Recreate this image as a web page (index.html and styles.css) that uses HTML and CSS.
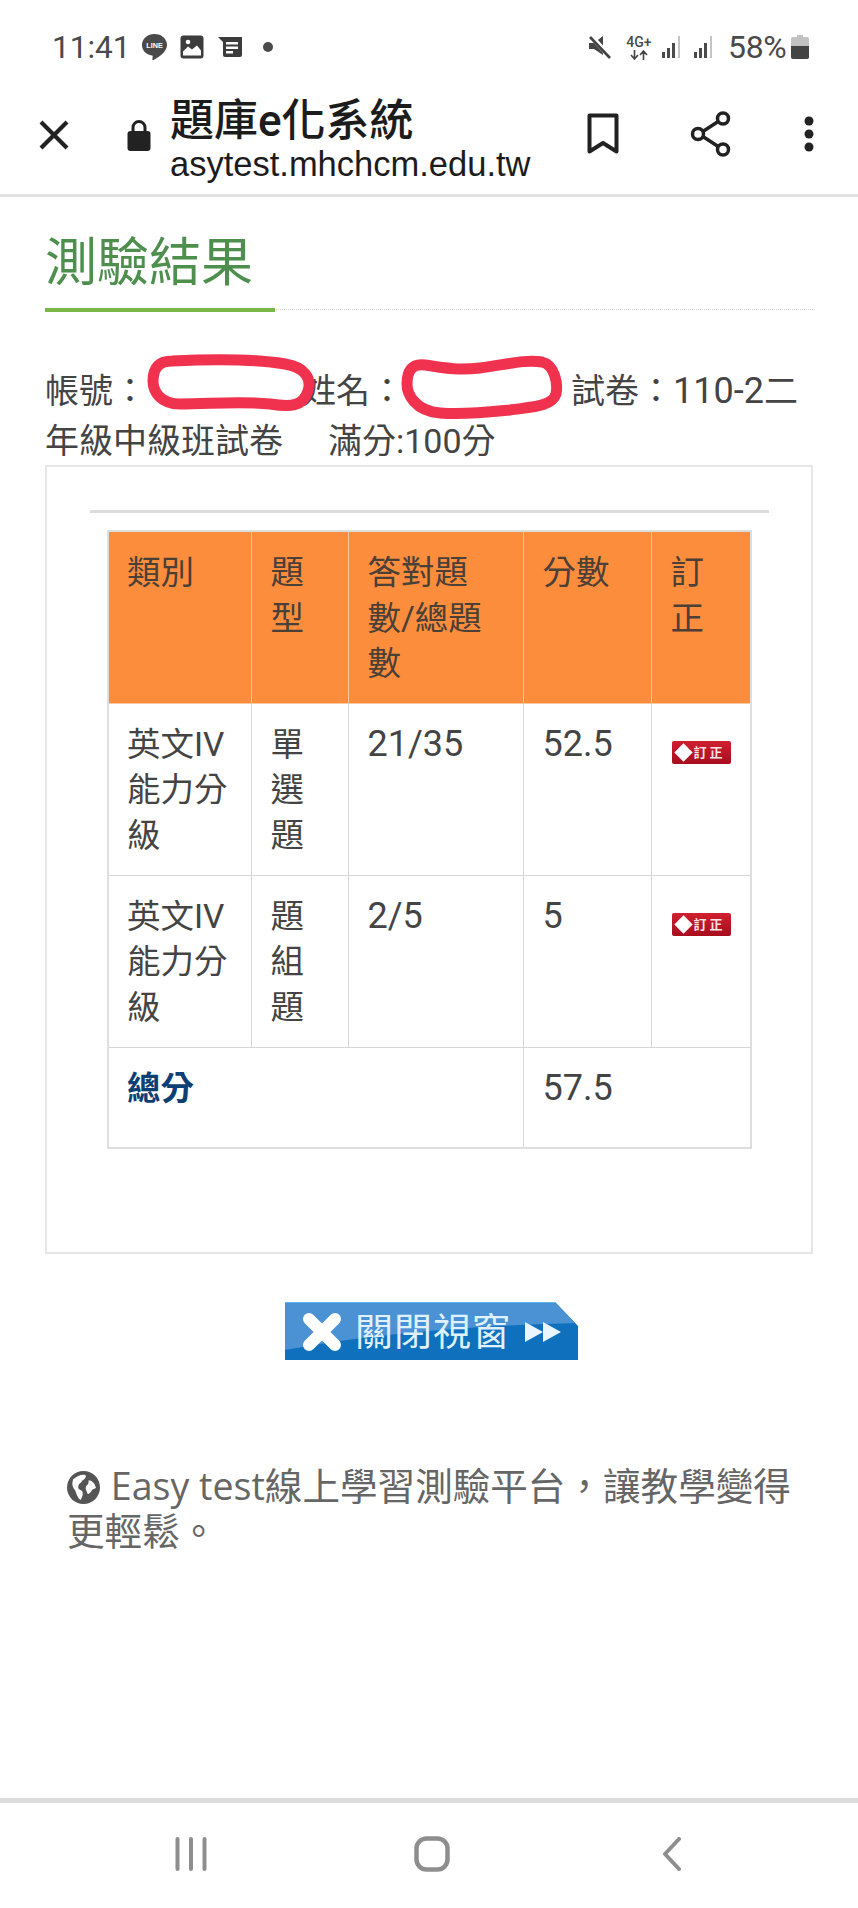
FILE: index.html
```html
<!DOCTYPE html>
<html lang="zh-Hant">
<head>
<meta charset="utf-8">
<title>題庫e化系統</title>
<link rel="stylesheet" href="styles.css">
</head>
<body>
<div class="phone">
  <div class="status">
    <div class="status-group">
      <span class="clock">11:41</span>
      <svg class="ic-line" viewBox="0 0 28 30"><path d="M14 1C6.800 1 1 6 1 12.400c0 5.600 4.300 10 10.400 11 .6.100.8.500.7 1l-.3 2.800c-.1.900.5 1.300 1.300.8 3-1.800 13.900-7.600 13.900-15.600C27 6 21.200 1 14 1z" fill="#4a4a4a"/><text x="14" y="15.500" text-anchor="middle" class="ic-line-text">LINE</text></svg>
      <svg class="ic-pic" viewBox="0 0 24 24"><rect x="0.500" y="0.500" width="23" height="23" rx="3" fill="#3c3c3c"/><path d="M3 20.500v-4l5-5 4 3 5-4 4 5v5z" fill="#fff"/><circle cx="8" cy="7" r="2.300" fill="#fff"/></svg>
      <svg class="ic-news" viewBox="0 0 24 22"><path d="M0 1h24v18a2 2 0 0 1-2 2H7a2 2 0 0 1-2-2V6z" fill="#3c3c3c"/><path d="M8 6h12v2.500H8zM8 10.500h12V13H8zM8 15h7v2.500H8z" fill="#fff"/></svg>
      <span class="status-dot"></span>
    </div>
    <div class="status-group">
      <svg class="ic-mute" viewBox="0 0 24 24"><path d="M1 8h5l9-7v19l-9-6H1z" fill="#444"/><path d="M3 1l20 22" stroke="#fff" stroke-width="5"/><path d="M2 2l20 21" stroke="#444" stroke-width="2.600"/></svg>
      <span class="net">
        <span class="net-top">4G+</span>
        <svg class="net-arrows" viewBox="0 0 20 10"><path d="M5.500 0v8M2 5l3.500 4L9 5M14.500 10V2M11 5l3.500-4L18 5" stroke="#444" stroke-width="1.600" fill="none"/></svg>
      </span>
      <svg class="ic-signal" viewBox="0 0 22 22"><path d="M0 16h3v6H0zM5 12h3v10H5zM10 7h3v15h-3z" fill="#4a4a4a"/><path d="M16 0h2v22h-2z" fill="#c4c4c4"/></svg>
      <svg class="ic-signal" viewBox="0 0 22 22"><path d="M0 16h3v6H0zM5 12h3v10H5zM10 7h3v15h-3z" fill="#4a4a4a"/><path d="M16 0h2v22h-2z" fill="#c4c4c4"/></svg>
      <span class="battery-text">58%</span>
      <svg class="ic-battery" viewBox="0 0 18 24"><path d="M6 0h6v2h4a2 2 0 0 1 2 2v18a2 2 0 0 1-2 2H2a2 2 0 0 1-2-2V4a2 2 0 0 1 2-2h4z" fill="#c2c2c2"/><path d="M0 11h18v11a2 2 0 0 1-2 2H2a2 2 0 0 1-2-2z" fill="#444"/></svg>
    </div>
  </div>

  <header class="toolbar">
    <svg class="ic-close" viewBox="0 0 32 32"><path d="M3 3l26 26M29 3L3 29" stroke="#222" stroke-width="4.200" fill="none"/></svg>
    <svg class="ic-lock" viewBox="0 0 24 32"><path d="M6 14V8.500a6 6 0 0 1 12 0V14" stroke="#222" stroke-width="3" fill="none"/><rect x="0.500" y="12" width="23" height="20" rx="3" fill="#222"/></svg>
    <div class="page-title">
      <div class="site-name">題庫e化系統</div>
      <div class="site-url">asytest.mhchcm.edu.tw</div>
    </div>
    <svg class="ic-bookmark" viewBox="0 0 32 42"><path d="M2.500 2.500h27v36L16 30 2.500 38.500z" stroke="#222" stroke-width="4" fill="none" stroke-linejoin="round"/></svg>
    <svg class="ic-share" viewBox="0 0 42 46"><path d="M32 8L9 23l23 15" stroke="#222" stroke-width="3.500" fill="none"/><circle cx="33" cy="7.500" r="5.500" fill="#fff" stroke="#222" stroke-width="3.500"/><circle cx="8" cy="23" r="5.500" fill="#fff" stroke="#222" stroke-width="3.500"/><circle cx="33" cy="38.500" r="5.500" fill="#fff" stroke="#222" stroke-width="3.500"/></svg>
    <svg class="ic-more" viewBox="0 0 10 36"><circle cx="5" cy="5" r="4.500" fill="#222"/><circle cx="5" cy="18" r="4.500" fill="#222"/><circle cx="5" cy="31" r="4.500" fill="#222"/></svg>
  </header>

  <main class="content">
    <h1 class="heading"><span class="heading-text">測驗結果</span></h1>

    <div class="info">
      <div class="info-line">帳號：<span class="hidden-id"></span>姓名：<span class="hidden-name"></span>試卷：<span class="num">110-2</span>二</div>
      <div class="info-line">年級中級班試卷<span class="info-gap">滿分:100分</span></div>
      <svg class="scribble" viewBox="45 340 520 90">
        <path d="M172 362C210 360 255 360 285 365C305 368 312 380 308 392C303 408 290 408 270 405C240 402 210 405 180 405C160 405 153 392 153 382C153 368 160 362 172 362Z"/>
        <path d="M425 366C440 368 455 372 480 369C505 366 525 360 542 363C555 366 558 385 556 395C552 408 530 408 510 411C490 413 465 416 440 414C415 412 407 395 407 385C407 372 412 364 425 366Z"/>
      </svg>
    </div>

    <section class="panel">
      <div class="panel-rule"></div>
      <table class="result">
        <colgroup>
          <col class="col-a"><col class="col-b"><col class="col-c"><col class="col-d"><col class="col-e">
        </colgroup>
        <thead>
          <tr><th>類別</th><th>題型</th><th>答對題數/總題數</th><th>分數</th><th>訂正</th></tr>
        </thead>
        <tbody>
          <tr>
            <td>英文IV能力分級</td><td>單選題</td><td><span class="num">21/35</span></td><td><span class="num">52.5</span></td>
            <td><a class="fix-badge"><span class="fix-diamond"></span><span>訂正</span></a></td>
          </tr>
          <tr>
            <td>英文IV能力分級</td><td>題組題</td><td><span class="num">2/5</span></td><td><span class="num">5</span></td>
            <td><a class="fix-badge"><span class="fix-diamond"></span><span>訂正</span></a></td>
          </tr>
          <tr class="total">
            <td colspan="3"><strong>總分</strong></td><td colspan="2"><span class="num">57.5</span></td>
          </tr>
        </tbody>
      </table>
    </section>

    <a class="close-btn">
      <svg class="close-art" viewBox="0 0 293 57" preserveAspectRatio="none"><path d="M0 47C90 30 200 22 293 20V0H0z" fill="#4a92d4"/></svg>
      <svg class="close-x" viewBox="0 0 42 42"><path d="M8 8l26 26M34 8L8 34" stroke="#fff" stroke-width="12" stroke-linecap="round"/></svg>
      <span class="close-label">關閉視窗</span>
      <svg class="close-arrows" viewBox="0 0 38 24"><path d="M1 2l18 10L1 22zM19 2l18 10-18 10z" fill="#eaf6ff"/></svg>
    </a>

    <p class="foot">
      <svg class="globe" viewBox="0 0 32 32"><circle cx="16" cy="16" r="16" fill="#555"/><path d="M6 8c4-3 8-5 12-4 1 2-1 4-3 5-1 3-4 3-4 6-1 3 3 3 4 5 1 3-1 7-2 8-3-2-4-6-5-9-2-3-4-5-2-11zM21 9c3 0 6 3 7 7-1 2-3 1-4 3-1 2-3 4-4 3-1-3-3-5-1-8 2-1 2-3 2-5z" fill="#fff"/></svg>
      <span class="foot-text">Easy test線上學習測驗平台，讓教學變得更輕鬆。</span>
    </p>
  </main>

  <nav class="navbar">
    <svg class="nav-recent" viewBox="0 0 32 34"><path d="M2.500 2v30M16 2v30M29.500 2v30" stroke="#8e8e8e" stroke-width="4" stroke-linecap="round"/></svg>
    <svg class="nav-home" viewBox="0 0 36 36"><rect x="2.500" y="2.500" width="31" height="31" rx="10" fill="none" stroke="#8e8e8e" stroke-width="4.500"/></svg>
    <svg class="nav-back" viewBox="0 0 20 34"><path d="M17 2L3 17l14 15" fill="none" stroke="#8e8e8e" stroke-width="4" stroke-linecap="round" stroke-linejoin="round"/></svg>
  </nav>
</div>
</body>
</html>
```

FILE: styles.css
```css
* { box-sizing: border-box; }

html, body { margin: 0; padding: 0; background: #fff; }

.phone {
  width: 858px;
  height: 1908px;
  display: flex;
  flex-direction: column;
  overflow: hidden;
  font-family: Roboto, "Noto Sans CJK TC", sans-serif;
  color: #444;
}

/* status bar */
.status {
  height: 94px;
  flex: none;
  display: flex;
  justify-content: space-between;
  align-items: center;
  padding: 0 49px 0 52px;
  color: #4a4a4a;
}
.status-group { display: flex; align-items: center; }
.clock { font-size: 31.5px; width: 76px; white-space: nowrap; }
.ic-line { width: 27px; height: 29px; margin-left: 13px; }
.ic-line-text { font: 700 7.5px "Liberation Sans", sans-serif; fill: #fff; }
.ic-pic { width: 24px; height: 24px; margin-left: 12px; }
.ic-news { width: 24px; height: 22px; margin-left: 14px; }
.status-dot { width: 10px; height: 10px; border-radius: 50%; background: #4a4a4a; margin-left: 21px; }

.ic-mute { width: 24px; height: 24px; }
.net { display: flex; flex-direction: column; align-items: center; width: 26px; margin-left: 14px; }
.net-top { font-size: 14px; line-height: 14px; font-weight: 500; }
.net-arrows { width: 22px; height: 10px; margin-top: 1px; }
.ic-signal { width: 22px; height: 22px; margin-left: 10px; }
.battery-text { font-size: 32px; margin-left: 12px; width: 61px; white-space: nowrap; letter-spacing: -0.3px; }
.ic-battery { width: 18px; height: 24px; margin-left: 2px; }

/* browser toolbar */
.toolbar {
  height: 103px;
  flex: none;
  display: flex;
  align-items: center;
  border-bottom: 3px solid #e2e2e2;
  padding: 0 0 20px 38px;
}
.ic-close { width: 32px; height: 32px; margin-top: 2px; flex: none; }
.ic-lock { width: 24px; height: 32px; margin-left: 57px; margin-top: 2px; flex: none; }
.page-title { width: 417px; margin: 12px 0 0 19px; color: #1c1c1c; flex: none; white-space: nowrap; }
.site-name { font-size: 44px; line-height: 44px; font-weight: 500; }
.site-url { font-family: "Liberation Sans", sans-serif; font-size: 34.5px; line-height: 36px; margin-top: 3px; }
.ic-bookmark { width: 32px; height: 42px; flex: none; }
.ic-share { width: 42px; height: 46px; margin-left: 71px; flex: none; }
.ic-more { width: 10px; height: 36px; margin-left: 72px; flex: none; }

/* page content */
.content { flex: 1; padding: 37px 45px 0; font-size: 34px; }

.heading {
  margin: 0;
  display: flex;
  border-bottom: 1px dotted #cfcfcf;
  height: 76px;
  font-size: 52px;
  font-weight: 400;
  line-height: 60px;
  color: #4e8f4e;
}
.heading-text {
  display: block;
  width: 230px;
  height: 78px;
  flex: none;
  border-bottom: 4px solid #7ab648;
  white-space: nowrap;
}

.num { font-size: 36px; }

.info { position: relative; margin-top: 56px; line-height: 50px; color: #444; }
.info-line { white-space: nowrap; height: 50px; }
.hidden-id { display: inline-block; width: 155px; }
.hidden-name { display: inline-block; width: 167px; }
.info-gap { margin-left: 45px; }
.scribble {
  position: absolute;
  left: 0;
  top: -27px;
  width: 520px;
  height: 90px;
  fill: #fff;
  stroke: #f0324f;
  stroke-width: 11;
}

.panel {
  height: 789px;
  border: 2px solid #e6e6e6;
  margin-top: -1px;
  padding-top: 43px;
}
.panel-rule { height: 3px; margin: 0 42px 0 43px; background: #dcdcdc; }

.result {
  width: 643px;
  margin: 17px 0 0 60px;
  border-collapse: collapse;
  table-layout: fixed;
  border: 2px solid #dedede;
  font-size: 33.5px;
  line-height: 45.6px;
}
.col-a { width: 143px; }
.col-b { width: 97px; }
.col-c { width: 175px; }
.col-d { width: 128px; }
.col-e { width: 100px; }
.result th, .result td {
  border: 1px solid #d6d6d6;
  padding: 18px 19px 16px 18px;
  text-align: left;
  vertical-align: top;
  font-weight: 400;
}
.result th:nth-child(n+2), .result td:nth-child(n+2) { padding-left: 19px; }
.result th { background: #fb8d3d; color: #4a4038; border-color: #f6c9a0; }
.result tbody tr:nth-child(2) td { padding-bottom: 17px; }
.result tr.total td { padding-bottom: 35px; }
.result strong { color: #0d3f74; font-weight: 700; }

.fix-badge {
  display: flex;
  align-items: center;
  width: 59px;
  height: 23px;
  margin: 19px 0 0 1px;
  padding-left: 4px;
  border-radius: 2px;
  background: linear-gradient(#d01f30, #a60d1e);
  color: #fbe4e4;
  font-size: 13px;
  line-height: 23px;
  font-weight: 700;
  letter-spacing: 3px;
  white-space: nowrap;
}
.fix-diamond {
  width: 13px;
  height: 13px;
  flex: none;
  margin: 0 4px 0 1px;
  background: #fff;
  transform: rotate(45deg);
}

/* close window graphic */
.close-btn {
  position: relative;
  display: flex;
  align-items: center;
  width: 293px;
  height: 58px;
  margin: 48px 0 0 240px;
  padding-left: 16px;
  background: #0f70bd;
  border-top: 1px solid #60b8ea;
  clip-path: polygon(0 0, 270px 0, 100% 24px, 100% 100%, 0 100%);
  color: #dff1fc;
}
.close-art { position: absolute; inset: 0; width: 100%; height: 100%; }
.close-x { position: relative; width: 42px; height: 42px; flex: none; }
.close-label { position: relative; font-size: 38px; line-height: 46px; margin-left: 12px; white-space: nowrap; letter-spacing: 1px; }
.close-arrows { position: relative; width: 38px; height: 24px; margin-left: 13px; flex: none; }

.foot {
  margin: 103px 0 0 22px;
  width: 735px;
  font-family: "Open Sans", "Noto Sans CJK TC", sans-serif;
  font-size: 37.6px;
  line-height: 45px;
  color: #666;
}
.globe { width: 33px; height: 33px; vertical-align: -4px; margin-right: 1px; }

/* bottom navigation */
.navbar {
  height: 110px;
  flex: none;
  display: flex;
  align-items: center;
  border-top: 5px solid #dcdcdc;
  padding: 0 0 4px 175px;
}
.nav-recent { width: 32px; height: 34px; flex: none; }
.nav-home { width: 36px; height: 36px; margin-left: 207px; flex: none; }
.nav-back { width: 20px; height: 34px; margin-left: 212px; flex: none; }
```
